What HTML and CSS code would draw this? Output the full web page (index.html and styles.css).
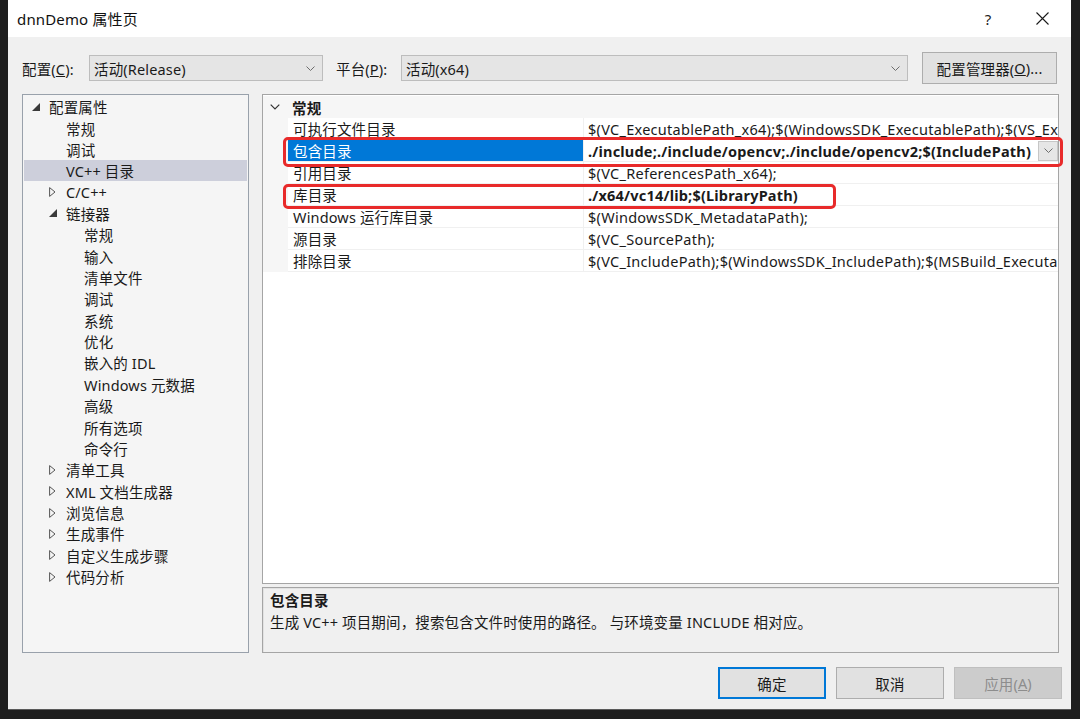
FILE: index.html
```html
<!DOCTYPE html>
<html lang="zh-CN">
<head>
<meta charset="utf-8">
<title>dnnDemo 属性页</title>
<link rel="stylesheet" href="styles.css">
</head>
<body>
<div class="window">
  <div class="titlebar">
    <div class="title">dnnDemo 属性页</div>
    <div class="help">?</div>
    <div class="close">
      <svg width="13" height="13" viewBox="0 0 13 13"><path d="M0.5 0.5 L12.5 12.5 M12.5 0.5 L0.5 12.5" stroke="#1a1a1a" stroke-width="1.1" fill="none"/></svg>
    </div>
  </div>

  <div class="configrow">
    <div class="lbl">配置(<u>C</u>):</div>
    <div class="combo c1"><span>活动(Release)</span>
      <svg class="chev" width="9" height="5" viewBox="0 0 9 5"><polyline points="0.5,0.5 4.5,4.5 8.5,0.5" stroke="#6d6d6d" fill="none" stroke-width="1"/></svg>
    </div>
    <div class="lbl lbl2">平台(<u>P</u>):</div>
    <div class="combo c2"><span>活动(x64)</span>
      <svg class="chev" width="9" height="5" viewBox="0 0 9 5"><polyline points="0.5,0.5 4.5,4.5 8.5,0.5" stroke="#6d6d6d" fill="none" stroke-width="1"/></svg>
    </div>
    <div class="btn cfgbtn">配置管理器(<u>O</u>)...</div>
  </div>

  <div class="main">
    <div class="tree">
      <div class="ti l0"><span class="tg"><svg width="8" height="8" viewBox="0 0 8 8"><polygon points="8,0 8,8 0,8" fill="#3a3a3a"/></svg></span>配置属性</div>
      <div class="ti l1"><span class="tg"></span>常规</div>
      <div class="ti l1"><span class="tg"></span>调试</div>
      <div class="ti l1 sel"><span class="tg"></span>VC++ 目录</div>
      <div class="ti l1"><span class="tg"><svg width="7" height="10" viewBox="0 0 7 10"><polygon points="0.6,0.6 6,5 0.6,9.4" fill="none" stroke="#555" stroke-width="1"/></svg></span>C/C++</div>
      <div class="ti l1"><span class="tg"><svg width="8" height="8" viewBox="0 0 8 8"><polygon points="8,0 8,8 0,8" fill="#3a3a3a"/></svg></span>链接器</div>
      <div class="ti l2"><span class="tg"></span>常规</div>
      <div class="ti l2"><span class="tg"></span>输入</div>
      <div class="ti l2"><span class="tg"></span>清单文件</div>
      <div class="ti l2"><span class="tg"></span>调试</div>
      <div class="ti l2"><span class="tg"></span>系统</div>
      <div class="ti l2"><span class="tg"></span>优化</div>
      <div class="ti l2"><span class="tg"></span>嵌入的 IDL</div>
      <div class="ti l2"><span class="tg"></span>Windows 元数据</div>
      <div class="ti l2"><span class="tg"></span>高级</div>
      <div class="ti l2"><span class="tg"></span>所有选项</div>
      <div class="ti l2"><span class="tg"></span>命令行</div>
      <div class="ti l1"><span class="tg"><svg width="7" height="10" viewBox="0 0 7 10"><polygon points="0.6,0.6 6,5 0.6,9.4" fill="none" stroke="#555" stroke-width="1"/></svg></span>清单工具</div>
      <div class="ti l1"><span class="tg"><svg width="7" height="10" viewBox="0 0 7 10"><polygon points="0.6,0.6 6,5 0.6,9.4" fill="none" stroke="#555" stroke-width="1"/></svg></span>XML 文档生成器</div>
      <div class="ti l1"><span class="tg"><svg width="7" height="10" viewBox="0 0 7 10"><polygon points="0.6,0.6 6,5 0.6,9.4" fill="none" stroke="#555" stroke-width="1"/></svg></span>浏览信息</div>
      <div class="ti l1"><span class="tg"><svg width="7" height="10" viewBox="0 0 7 10"><polygon points="0.6,0.6 6,5 0.6,9.4" fill="none" stroke="#555" stroke-width="1"/></svg></span>生成事件</div>
      <div class="ti l1"><span class="tg"><svg width="7" height="10" viewBox="0 0 7 10"><polygon points="0.6,0.6 6,5 0.6,9.4" fill="none" stroke="#555" stroke-width="1"/></svg></span>自定义生成步骤</div>
      <div class="ti l1"><span class="tg"><svg width="7" height="10" viewBox="0 0 7 10"><polygon points="0.6,0.6 6,5 0.6,9.4" fill="none" stroke="#555" stroke-width="1"/></svg></span>代码分析</div>
    </div>

    <div class="rightcol">
      <div class="grid">
        <div class="cat">
          <span class="catchev"><svg width="10" height="6" viewBox="0 0 10 6"><polyline points="0.7,0.7 5,5 9.3,0.7" fill="none" stroke="#333" stroke-width="1.2"/></svg></span>
          <span class="cattext">常规</span>
        </div>
        <div class="prow"><div class="gut"></div><div class="pname">可执行文件目录</div><div class="pval"><span class="vt">$(VC_ExecutablePath_x64);$(WindowsSDK_ExecutablePath);$(VS_ExecutablePath);$(MSBuild_ExecutablePath);$(FxCopDir);$(PATH);</span></div></div>
        <div class="prow psel"><div class="gut"></div><div class="pname">包含目录</div><div class="pval"><span class="vt b">./include;./include/opencv;./include/opencv2;$(IncludePath)</span>
          <span class="ddbtn"><svg width="9" height="5" viewBox="0 0 9 5"><polyline points="0.5,0.5 4.5,4.5 8.5,0.5" stroke="#6d6d6d" fill="none" stroke-width="1"/></svg></span></div></div>
        <div class="prow"><div class="gut"></div><div class="pname">引用目录</div><div class="pval"><span class="vt">$(VC_ReferencesPath_x64);</span></div></div>
        <div class="prow"><div class="gut"></div><div class="pname">库目录</div><div class="pval"><span class="vt b">./x64/vc14/lib;$(LibraryPath)</span></div></div>
        <div class="prow"><div class="gut"></div><div class="pname">Windows 运行库目录</div><div class="pval"><span class="vt">$(WindowsSDK_MetadataPath);</span></div></div>
        <div class="prow"><div class="gut"></div><div class="pname">源目录</div><div class="pval"><span class="vt">$(VC_SourcePath);</span></div></div>
        <div class="prow"><div class="gut"></div><div class="pname">排除目录</div><div class="pval"><span class="vt">$(VC_IncludePath);$(WindowsSDK_IncludePath);$(MSBuild_ExecutablePath);$(VC_LibraryPath_x64);</span></div></div>
      </div>
      <div class="desc">
        <div class="dtitle">包含目录</div>
        <div class="dtext">生成 VC++ 项目期间，搜索包含文件时使用的路径。 与环境变量 INCLUDE 相对应。</div>
      </div>
    </div>
  </div>

  <div class="footer">
    <div class="btn fbtn def">确定</div>
    <div class="btn fbtn">取消</div>
    <div class="btn fbtn dis">应用(<u>A</u>)</div>
  </div>

  <div class="mark m1"></div>
  <div class="mark m2"></div>
</div>
</body>
</html>
```

FILE: styles.css
```css
* { box-sizing: border-box; }
html, body {
  margin: 0;
  padding: 0;
}
body {
  width: 1080px;
  height: 719px;
  overflow: hidden;
  background: #1e1e1e;
  font-family: "Noto Sans", "Noto Sans CJK SC", sans-serif;
  font-size: 14.5px;
  letter-spacing: 0.15px;
  color: #1a1a1a;
}
.window {
  position: relative;
  margin-left: 8px;
  width: 1063px;
  height: 710px;
  background: #f0f0f0;
  display: flex;
  flex-direction: column;
  border-bottom: 1px solid #5a5a5a;
}
.titlebar {
  height: 37px;
  background: #fff;
  display: flex;
  align-items: center;
  padding-left: 9px;
}
.title {
  flex: 1;
  font-size: 15px;
  color: #111;
}
.help {
  width: 50px;
  text-align: center;
  font-size: 15px;
  color: #222;
}
.close {
  width: 58px;
  display: flex;
  justify-content: center;
  align-items: center;
}
.configrow {
  margin-top: 15px;
  height: 32px;
  display: flex;
  align-items: center;
  padding: 0 14px;
}
.lbl {
  width: 67px;
  white-space: nowrap;
}
.lbl2 {
  margin-left: 13px;
  width: 65px;
}
.combo {
  height: 26px;
  background: #e5e5e5;
  border: 1px solid #bdbdbd;
  display: flex;
  align-items: center;
  padding-left: 4px;
  padding-right: 7px;
}
.combo span { flex: 1; }
.c1 { width: 234px; }
.c2 { width: 507px; }
.btn {
  height: 32px;
  background: #e1e1e1;
  border: 1px solid #adadad;
  display: flex;
  align-items: center;
  justify-content: center;
  white-space: nowrap;
}
.cfgbtn {
  margin-left: 14px;
  width: 135px;
}
.main {
  margin-top: 10px;
  display: flex;
  gap: 13px;
  padding: 0 12px 0 14px;
}
.tree {
  width: 227px;
  height: 559px;
  background: #f5f5f5;
  border: 1px solid #99a1ab;
  padding-top: 1px;
}
.ti {
  height: 21.36px;
  display: flex;
  align-items: center;
  white-space: nowrap;
  margin: 0 1px;
}
.tg {
  width: 17px;
  flex: none;
  display: flex;
  align-items: center;
}
.l0 { padding-left: 8px; }
.l1 { padding-left: 25px; }
.l2 { padding-left: 43px; }
.sel { background: #cdcfdb; }
.rightcol {
  width: 797px;
  display: flex;
  flex-direction: column;
  gap: 3px;
}
.grid {
  height: 490px;
  background: #fff;
  border: 1px solid #a5a5a5;
  padding-top: 1px;
}
.cat {
  height: 22px;
  display: flex;
  align-items: center;
  background: #f6f6f6;
}
.catchev {
  width: 29px;
  padding-left: 7px;
  display: flex;
  align-items: center;
}
.cattext { font-weight: bold; }
.prow {
  height: 22px;
  display: flex;
}
.gut {
  width: 25px;
  flex: none;
  background: #f6f6f6;
}
.pname {
  width: 296px;
  flex: none;
  padding-left: 5px;
  border-right: 1px solid #f0f0f0;
  border-bottom: 1px solid #f0f0f0;
  display: flex;
  align-items: center;
  white-space: nowrap;
}
.pval {
  flex: 1;
  min-width: 0;
  display: flex;
  align-items: center;
  padding-left: 4px;
  border-bottom: 1px solid #f0f0f0;
  overflow: hidden;
}
.vt {
  flex: 1;
  white-space: nowrap;
  overflow: hidden;
  letter-spacing: 0.27px;
}
.vt.b { letter-spacing: 0.2px; }
.b { font-weight: bold; }
.psel .pname {
  background: #0078d7;
  color: #fff;
}
.ddbtn {
  flex: none;
  width: 20px;
  height: 20px;
  background: #e6e6e6;
  border: 1px solid #c6c6c6;
  display: flex;
  align-items: center;
  justify-content: center;
}
.desc {
  height: 66px;
  background: #f0f0f0;
  border: 1px solid #a5a5a5;
  box-shadow: inset 1px 1px 0 #e2e2e2;
  padding: 1px 7px 0;
}
.dtitle {
  font-weight: bold;
  line-height: 22px;
}
.dtext {
  line-height: 22px;
}
.footer {
  margin-top: 14px;
  display: flex;
  justify-content: flex-end;
  gap: 10px;
  padding-right: 9px;
}
.fbtn { width: 108px; }
.def {
  border-color: #0078d7;
  box-shadow: inset 0 0 0 1px #0078d7;
}
.dis {
  background: #cccccc;
  border-color: #bfbfbf;
  color: #8d8d8d;
}
.mark {
  position: absolute;
  border: 3px solid #e82a2a;
  border-radius: 5px;
  pointer-events: none;
}
.m1 {
  left: 275px;
  top: 137px;
  width: 780px;
  height: 30px;
}
.m2 {
  left: 275px;
  top: 184px;
  width: 553px;
  height: 25px;
}
```
